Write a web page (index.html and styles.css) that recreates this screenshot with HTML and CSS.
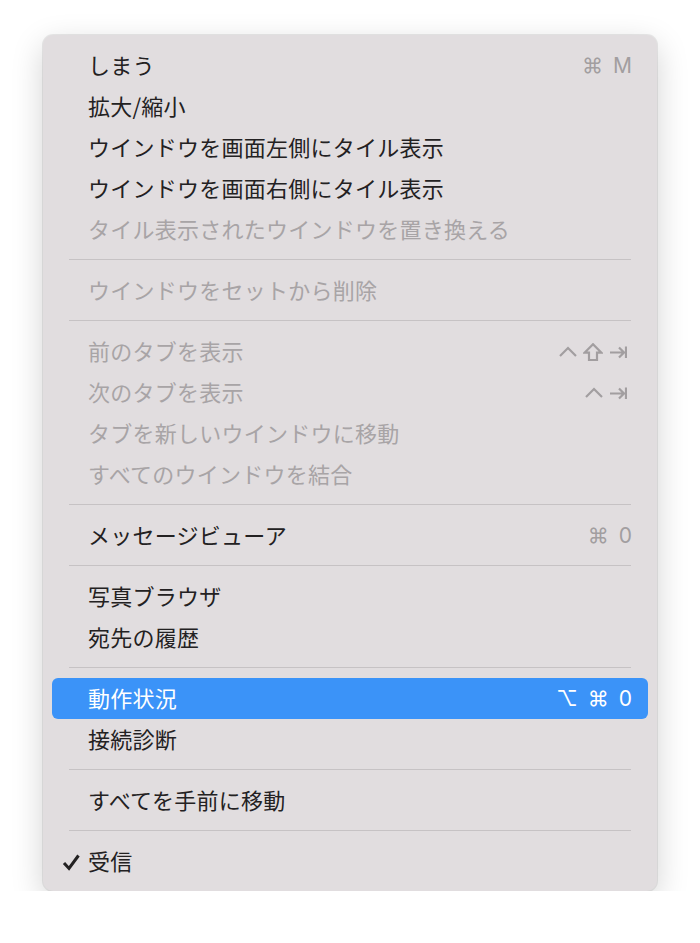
FILE: index.html
```html
<!DOCTYPE html>
<html lang="ja">
<head>
  <meta charset="UTF-8">
  <meta name="viewport" content="width=device-width, initial-scale=1.0">
  <title>ウインドウ</title>
  <link rel="stylesheet" href="styles.css">
</head>
<body>
  <div class="menu">
    <div class="item"><span class="mark"></span><span class="label">しまう</span><span class="keys"><span class="k">⌘</span><span class="k">M</span></span></div>
    <div class="item"><span class="mark"></span><span class="label">拡大/縮小</span></div>
    <div class="item"><span class="mark"></span><span class="label">ウインドウを画面左側にタイル表示</span></div>
    <div class="item"><span class="mark"></span><span class="label">ウインドウを画面右側にタイル表示</span></div>
    <div class="item off"><span class="mark"></span><span class="label">タイル表示されたウインドウを置き換える</span></div>
    <div class="sep"></div>
    <div class="item off"><span class="mark"></span><span class="label">ウインドウをセットから削除</span></div>
    <div class="sep"></div>
    <div class="item off"><span class="mark"></span><span class="label">前のタブを表示</span>
      <span class="keys icons">
        <svg class="ico" width="18" height="18" viewBox="0 0 18 18"><path d="M1 13 L9 5 L17 13"/></svg>
        <svg class="ico" width="20" height="18" viewBox="0 0 20 18"><path d="M10 1.2 L1.8 9.6 H6 V17 H14 V9.6 H18.2 Z"/></svg>
        <svg class="ico" width="18" height="18" viewBox="0 0 18 18"><path d="M1 9.5 H15 M10 4.5 L15 9.5 L10 14.5 M17 3.5 V15"/></svg>
      </span>
    </div>
    <div class="item off"><span class="mark"></span><span class="label">次のタブを表示</span>
      <span class="keys icons">
        <svg class="ico" width="18" height="18" viewBox="0 0 18 18"><path d="M1 13 L9 5 L17 13"/></svg>
        <svg class="ico" width="18" height="18" viewBox="0 0 18 18"><path d="M1 9.5 H15 M10 4.5 L15 9.5 L10 14.5 M17 3.5 V15"/></svg>
      </span>
    </div>
    <div class="item off"><span class="mark"></span><span class="label">タブを新しいウインドウに移動</span></div>
    <div class="item off"><span class="mark"></span><span class="label">すべてのウインドウを結合</span></div>
    <div class="sep"></div>
    <div class="item"><span class="mark"></span><span class="label">メッセージビューア</span><span class="keys"><span class="k">⌘</span><span class="k">0</span></span></div>
    <div class="sep"></div>
    <div class="item"><span class="mark"></span><span class="label">写真ブラウザ</span></div>
    <div class="item"><span class="mark"></span><span class="label">宛先の履歴</span></div>
    <div class="sep"></div>
    <div class="item active"><span class="mark"></span><span class="label">動作状況</span><span class="keys"><span class="k">⌥</span><span class="k">⌘</span><span class="k">0</span></span></div>
    <div class="item"><span class="mark"></span><span class="label">接続診断</span></div>
    <div class="sep"></div>
    <div class="item"><span class="mark"></span><span class="label">すべてを手前に移動</span></div>
    <div class="sep"></div>
    <div class="item">
      <span class="mark"><svg class="check" width="18" height="18" viewBox="0 0 18 18"><path d="M2 10 L7 15.5 L16.5 2.5"/></svg></span>
      <span class="label">受信</span>
    </div>
  </div>
</body>
</html>
```

FILE: styles.css
```css
body {
  margin: 0;
  padding: 35px 0 0 43px;
  background: #fff;
  font-family: "Noto Sans CJK JP", "Noto Sans", sans-serif;
}

.menu {
  width: 614px;
  box-sizing: border-box;
  padding: 10px 9px 9px;
  background: #e1dddf;
  border-radius: 10px;
  box-shadow: 0 0 0 1px rgba(0, 0, 0, 0.08), 0 10px 32px rgba(0, 0, 0, 0.18);
}

.item {
  display: flex;
  align-items: center;
  height: 41px;
  padding-right: 16px;
  border-radius: 6px;
  color: #232122;
  font-size: 22px;
  letter-spacing: 0.25px;
}

.mark {
  width: 36px;
  flex-shrink: 0;
  padding-left: 10px;
  box-sizing: border-box;
  display: flex;
  align-items: center;
}

.label {
  flex: 1;
  white-space: nowrap;
  line-height: 1;
  padding-bottom: 4px;
}

.keys {
  display: flex;
  align-items: center;
  gap: 6px;
  color: #a29ea0;
  font-family: Inter, "DejaVu Sans", sans-serif;
  font-size: 21px;
  letter-spacing: 0;
}

.keys.icons {
  margin-right: 5px;
}

.keys .k {
  line-height: 1;
}

.keys .k + .k {
  margin-left: 4px;
}

.ico {
  fill: none;
  stroke: #a29ea0;
  stroke-width: 2.2;
  stroke-linejoin: miter;
}

.check {
  fill: none;
  stroke: #232122;
  stroke-width: 3;
}

.off {
  color: #a8a4a6;
}

.active {
  background: #3b93f8;
  color: #fff;
}

.active .keys {
  color: #fff;
}

.sep {
  height: 1px;
  margin: 9px 17px 10px;
  background: #c6c2c4;
}
```
